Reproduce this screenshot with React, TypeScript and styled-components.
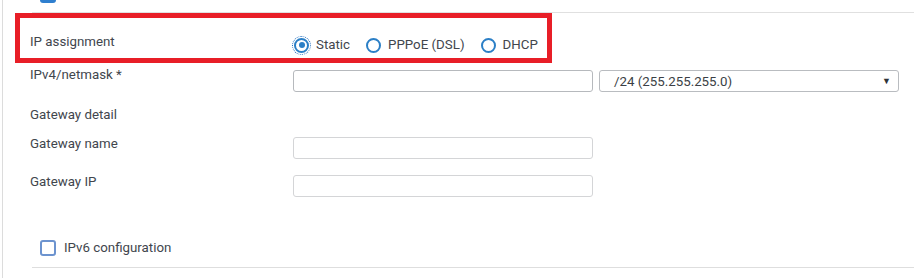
import React, { FC } from 'react';
import styled, { createGlobalStyle } from 'styled-components';

const GlobalStyle = createGlobalStyle`
    html, body {
        margin: 0;
        padding: 0;
        background: #fff;
    }
    body {
        font-family: Roboto, "Liberation Sans", Arial, sans-serif;
        font-size: 13.3px;
        color: #41464d;
        overflow: hidden;
    }
`;

const Page = styled.div`
    margin-left: 2px;
    border-left: 1px solid #dcdcdc;
    min-height: 278px;
    padding-left: 27px;
    box-sizing: border-box;
`;

const TopBar = styled.div`
    height: 12px;
    margin-left: 2px;
    border-bottom: 1px solid #e0e0e0;
    display: flex;
`;

const TopCheckbox = styled.span`
    display: block;
    width: 16px;
    height: 16px;
    margin: -13px 0 0 8px;
    border-radius: 3px;
    background: #2f7fcf;
`;

const Highlight = styled.div`
    box-sizing: border-box;
    width: 537px;
    height: 50px;
    margin-left: -15px;
    padding: 16px 0 0 10px;
    border: 5px solid #e81e27;
    display: grid;
    grid-template-columns: 263px auto;
    align-items: start;
`;

const Row = styled.div<{ $top: number }>`
    display: grid;
    grid-template-columns: 257px 300px 300px;
    column-gap: 6px;
    align-items: start;
    margin-top: ${p => p.$top}px;
`;

const Label = styled.div<{ $pad?: number }>`
    line-height: 16px;
    padding-top: ${p => p.$pad ?? 0}px;
    white-space: nowrap;
`;

const SectionTitle = styled.div<{ $top: number }>`
    line-height: 16px;
    margin-top: ${p => p.$top}px;
`;

const RadioGroup = styled.div`
    display: flex;
    align-items: center;
    height: 22px;
    gap: 16px;
    padding-left: 1px;
`;

const RadioOption = styled.label`
    display: flex;
    align-items: center;
    gap: 7px;
    line-height: 16px;
    cursor: pointer;
`;

const RadioMark = styled.span<{ $checked?: boolean }>`
    box-sizing: border-box;
    position: relative;
    width: 15px;
    height: 15px;
    border: 2px solid #2b7fc6;
    border-radius: 50%;
    outline: ${p => p.$checked ? '1px dotted #2470c0' : 'none'};
    outline-offset: 1px;

    &::after {
        content: '';
        display: ${p => p.$checked ? 'block' : 'none'};
        position: absolute;
        top: 2.5px;
        left: 2.5px;
        width: 6px;
        height: 6px;
        border-radius: 50%;
        background: #2b7fc6;
    }
`;

const TextInput = styled.input<{ $tone?: 'dark' | 'light'; $top: number }>`
    box-sizing: border-box;
    width: 300px;
    height: 22px;
    margin: ${p => p.$top}px 0 0;
    padding: 0 8px;
    border: 1px solid ${p => p.$tone === 'dark' ? '#b6b9bd' : '#d4d5d7'};
    border-radius: 3px;
    background: #fff;
    font: inherit;
    outline: none;
`;

const Select = styled.div<{ $top: number }>`
    box-sizing: border-box;
    width: 300px;
    height: 22px;
    margin-top: ${p => p.$top}px;
    padding: 0 7px 0 14px;
    border: 1px solid #b9bcc0;
    border-radius: 3px;
    display: flex;
    align-items: center;
    justify-content: space-between;
    color: #3b3f45;
`;

const Caret = styled.span`
    font-size: 9px;
    color: #2f3338;
`;

const CheckRow = styled.label`
    display: flex;
    align-items: center;
    height: 16px;
    margin: 43px 0 0 10px;
    gap: 8px;
    line-height: 16px;
`;

const CheckBox = styled.span`
    box-sizing: border-box;
    width: 16px;
    height: 16px;
    border: 2px solid #6c93cf;
    border-radius: 3px;
    background: #fff;
`;

const Divider = styled.div`
    margin: 11px 0 0 2px;
    border-top: 1px solid #dedede;
`;

interface IRadioProps {
    label: string;
    checked?: boolean;
}

const Radio: FC<IRadioProps> = ({ label, checked }) => (
    <RadioOption>
        <RadioMark $checked={checked} />
        {label}
    </RadioOption>
);

const App: FC = () => {
    return (
        <>
            <GlobalStyle />
            <Page>
                <TopBar>
                    <TopCheckbox />
                </TopBar>

                <Highlight>
                    <Label>IP assignment</Label>
                    <RadioGroup>
                        <Radio label="Static" checked />
                        <Radio label="PPPoE (DSL)" />
                        <Radio label="DHCP" />
                    </RadioGroup>
                </Highlight>

                <Row $top={0}>
                    <Label $pad={4}>IPv4/netmask *</Label>
                    <TextInput $tone="dark" $top={7} />
                    <Select $top={7}>
                        <span>/24 (255.255.255.0)</span>
                        <Caret>▼</Caret>
                    </Select>
                </Row>

                <SectionTitle $top={15}>Gateway detail</SectionTitle>

                <Row $top={12}>
                    <Label $pad={1}>Gateway name</Label>
                    <TextInput $top={2} />
                </Row>

                <Row $top={14}>
                    <Label $pad={1}>Gateway IP</Label>
                    <TextInput $top={2} />
                </Row>

                <CheckRow>
                    <CheckBox />
                    IPv6 configuration
                </CheckRow>

                <Divider />
            </Page>
        </>
    );
};

export default App;
